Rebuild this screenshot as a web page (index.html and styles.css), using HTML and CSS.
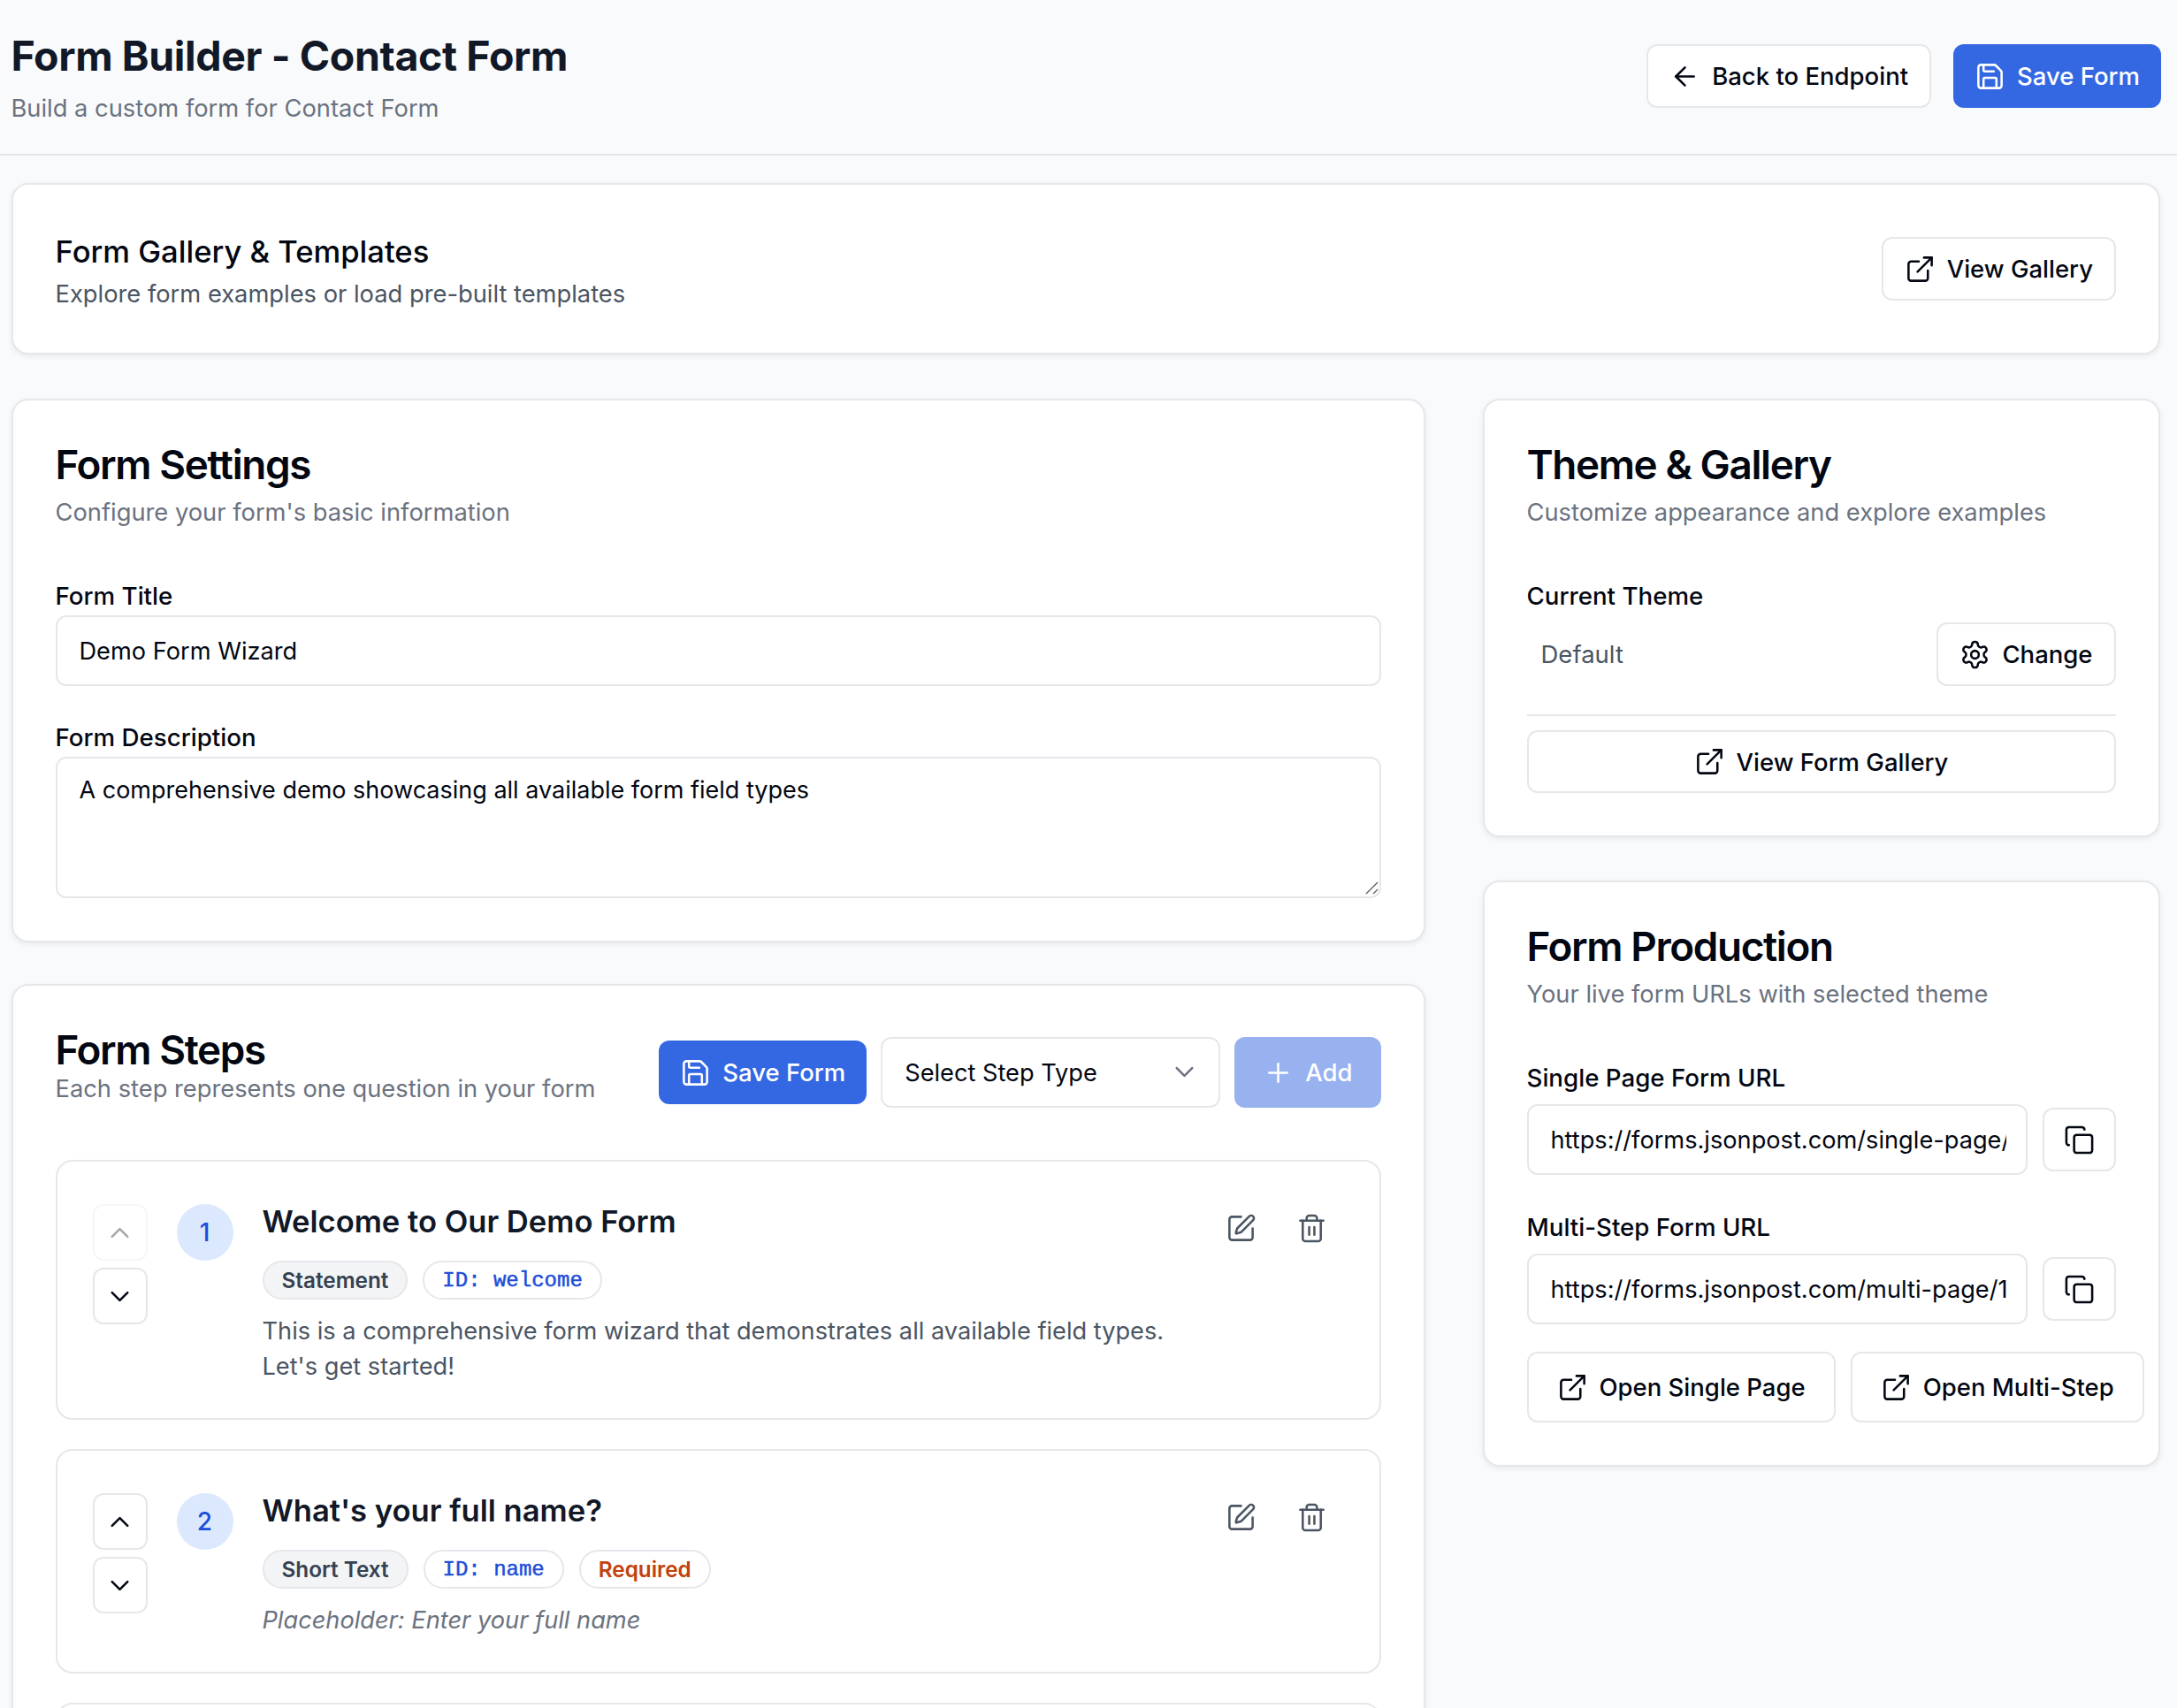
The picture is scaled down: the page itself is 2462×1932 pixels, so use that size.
FILE: index.html
```html
<!DOCTYPE html>
<html lang="en">
<head>
    <meta charset="UTF-8">
    <meta name="viewport" content="width=device-width, initial-scale=1.0">
    <title>Form Builder - Contact Form</title>
    <link rel="stylesheet" href="styles.css">
</head>
<body>

    <!-- icon sprites -->
    <svg class="sprites" xmlns="http://www.w3.org/2000/svg">
        <symbol id="i-arrow" viewBox="0 0 24 24"><path d="m12 19-7-7 7-7"/><path d="M19 12H5"/></symbol>
        <symbol id="i-save" viewBox="0 0 24 24"><path d="M15.2 3a2 2 0 0 1 1.4.6l3.8 3.8a2 2 0 0 1 .6 1.4V19a2 2 0 0 1-2 2H5a2 2 0 0 1-2-2V5a2 2 0 0 1 2-2z"/><path d="M17 21v-7a1 1 0 0 0-1-1H8a1 1 0 0 0-1 1v7"/><path d="M7 3v4a1 1 0 0 0 1 1h7"/></symbol>
        <symbol id="i-external" viewBox="0 0 24 24"><path d="M15 3h6v6"/><path d="M10 14 21 3"/><path d="M18 13v6a2 2 0 0 1-2 2H5a2 2 0 0 1-2-2V8a2 2 0 0 1 2-2h6"/></symbol>
        <symbol id="i-pen" viewBox="0 0 24 24"><path d="M12 3H5a2 2 0 0 0-2 2v14a2 2 0 0 0 2 2h14a2 2 0 0 0 2-2v-7"/><path d="M18.375 2.625a1 1 0 0 1 3 3l-9.013 9.014a2 2 0 0 1-.853.505l-2.873.84a.5.5 0 0 1-.62-.62l.84-2.873a2 2 0 0 1 .506-.852z"/></symbol>
        <symbol id="i-trash" viewBox="0 0 24 24"><path d="M3 6h18"/><path d="M19 6v14c0 1-1 2-2 2H7c-1 0-2-1-2-2V6"/><path d="M8 6V4c0-1 1-2 2-2h4c1 0 2 1 2 2v2"/><path d="M10 11v6"/><path d="M14 11v6"/></symbol>
        <symbol id="i-gear" viewBox="0 0 24 24"><path d="M12.22 2h-.44a2 2 0 0 0-2 2v.18a2 2 0 0 1-1 1.73l-.43.25a2 2 0 0 1-2 0l-.15-.08a2 2 0 0 0-2.73.73l-.22.38a2 2 0 0 0 .73 2.73l.15.1a2 2 0 0 1 1 1.72v.51a2 2 0 0 1-1 1.74l-.15.09a2 2 0 0 0-.73 2.73l.22.38a2 2 0 0 0 2.73.73l.15-.08a2 2 0 0 1 2 0l.43.25a2 2 0 0 1 1 1.73V20a2 2 0 0 0 2 2h.44a2 2 0 0 0 2-2v-.18a2 2 0 0 1 1-1.73l.43-.25a2 2 0 0 1 2 0l.15.08a2 2 0 0 0 2.73-.73l.22-.39a2 2 0 0 0-.73-2.73l-.15-.08a2 2 0 0 1-1-1.74v-.5a2 2 0 0 1 1-1.74l.15-.09a2 2 0 0 0 .73-2.73l-.22-.38a2 2 0 0 0-2.73-.73l-.15.08a2 2 0 0 1-2 0l-.43-.25a2 2 0 0 1-1-1.73V4a2 2 0 0 0-2-2z"/><circle cx="12" cy="12" r="3"/></symbol>
        <symbol id="i-copy" viewBox="0 0 24 24"><rect x="8" y="8" width="14" height="14" rx="2"/><path d="M4 16c-1.1 0-2-.9-2-2V4c0-1.1.9-2 2-2h10c1.1 0 2 .9 2 2"/></symbol>
        <symbol id="i-up" viewBox="0 0 24 24"><path d="m18 15-6-6-6 6"/></symbol>
        <symbol id="i-down" viewBox="0 0 24 24"><path d="m6 9 6 6 6-6"/></symbol>
        <symbol id="i-plus" viewBox="0 0 24 24"><path d="M5 12h14"/><path d="M12 5v14"/></symbol>
    </svg>

    <header class="page-header">
        <div>
            <h1>Form Builder - Contact Form</h1>
            <p class="page-sub">Build a custom form for Contact Form</p>
        </div>
        <div class="header-actions">
            <button class="btn"><svg class="icon"><use href="#i-arrow"/></svg>Back to Endpoint</button>
            <button class="btn btn-primary"><svg class="icon"><use href="#i-save"/></svg>Save Form</button>
        </div>
    </header>

    <main class="page-main">
        <section class="card gallery-card">
            <div class="gallery-text">
                <h2 class="gallery-title">Form Gallery &amp; Templates</h2>
                <p class="gallery-sub">Explore form examples or load pre-built templates</p>
            </div>
            <button class="btn"><svg class="icon"><use href="#i-external"/></svg>View Gallery</button>
        </section>

        <div class="columns">
            <div class="col">
                <section class="card">
                    <div class="card-head">
                        <h2 class="card-title">Form Settings</h2>
                        <p class="card-sub">Configure your form's basic information</p>
                    </div>
                    <label class="field-label tight">Form Title</label>
                    <input class="text-input" type="text" value="Demo Form Wizard">
                    <label class="field-label tight next">Form Description</label>
                    <div class="area-wrap">
                        <textarea class="text-input text-area">A comprehensive demo showcasing all available form field types</textarea>
                        <svg class="area-grip" viewBox="0 0 16 16"><path d="M1 15 14 2"/><path d="M9 15l5-5"/></svg>
                    </div>
                </section>

                <section class="card">
                    <div class="steps-head">
                        <div>
                            <h2 class="card-title">Form Steps</h2>
                            <p class="steps-sub">Each step represents one question in your form</p>
                        </div>
                        <div class="steps-controls">
                            <button class="btn btn-primary"><svg class="icon"><use href="#i-save"/></svg>Save Form</button>
                            <div class="select-wrap">
                                <select class="step-select"><option>Select Step Type</option></select>
                                <svg class="icon select-chevron"><use href="#i-down"/></svg>
                            </div>
                            <button class="btn btn-primary btn-add"><svg class="icon"><use href="#i-plus"/></svg>Add</button>
                        </div>
                    </div>

                    <div class="step-list">
                        <article class="step">
                            <div class="move-btns">
                                <button class="move-btn disabled"><svg class="icon"><use href="#i-up"/></svg></button>
                                <button class="move-btn"><svg class="icon"><use href="#i-down"/></svg></button>
                            </div>
                            <div class="step-num">1</div>
                            <div class="step-body">
                                <h3 class="step-title">Welcome to Our Demo Form</h3>
                                <div class="badges">
                                    <span class="badge badge-type">Statement</span>
                                    <span class="badge badge-id">ID: welcome</span>
                                </div>
                                <p class="step-desc">This is a comprehensive form wizard that demonstrates all available field types. Let's get started!</p>
                            </div>
                            <div class="step-actions">
                                <button class="icon-btn"><svg class="icon"><use href="#i-pen"/></svg></button>
                                <button class="icon-btn"><svg class="icon"><use href="#i-trash"/></svg></button>
                            </div>
                        </article>

                        <article class="step">
                            <div class="move-btns">
                                <button class="move-btn"><svg class="icon"><use href="#i-up"/></svg></button>
                                <button class="move-btn"><svg class="icon"><use href="#i-down"/></svg></button>
                            </div>
                            <div class="step-num">2</div>
                            <div class="step-body">
                                <h3 class="step-title">What's your full name?</h3>
                                <div class="badges">
                                    <span class="badge badge-type">Short Text</span>
                                    <span class="badge badge-id">ID: name</span>
                                    <span class="badge badge-req">Required</span>
                                </div>
                                <p class="step-desc step-hint">Placeholder: Enter your full name</p>
                            </div>
                            <div class="step-actions">
                                <button class="icon-btn"><svg class="icon"><use href="#i-pen"/></svg></button>
                                <button class="icon-btn"><svg class="icon"><use href="#i-trash"/></svg></button>
                            </div>
                        </article>

                        <article class="step step-next"></article>
                    </div>
                </section>
            </div>

            <div class="col col-side">
                <section class="card">
                    <div class="card-head">
                        <h2 class="card-title">Theme &amp; Gallery</h2>
                        <p class="card-sub">Customize appearance and explore examples</p>
                    </div>
                    <label class="field-label">Current Theme</label>
                    <div class="theme-row">
                        <span class="theme-name">Default</span>
                        <button class="btn"><svg class="icon"><use href="#i-gear"/></svg>Change</button>
                    </div>
                    <hr class="divider">
                    <button class="btn btn-wide"><svg class="icon"><use href="#i-external"/></svg>View Form Gallery</button>
                </section>

                <section class="card">
                    <div class="card-head">
                        <h2 class="card-title">Form Production</h2>
                        <p class="card-sub">Your live form URLs with selected theme</p>
                    </div>
                    <label class="field-label">Single Page Form URL</label>
                    <div class="url-row">
                        <input class="text-input" type="text" readonly value="https://forms.jsonpost.com/single-page/1234567890">
                        <button class="btn btn-copy"><svg class="icon"><use href="#i-copy"/></svg></button>
                    </div>
                    <label class="field-label next">Multi-Step Form URL</label>
                    <div class="url-row">
                        <input class="text-input" type="text" readonly value="https://forms.jsonpost.com/multi-page/1234567890">
                        <button class="btn btn-copy"><svg class="icon"><use href="#i-copy"/></svg></button>
                    </div>
                    <div class="open-row">
                        <button class="btn btn-tall"><svg class="icon"><use href="#i-external"/></svg>Open Single Page</button>
                        <button class="btn btn-tall"><svg class="icon"><use href="#i-external"/></svg>Open Multi-Step</button>
                    </div>
                </section>
            </div>
        </div>
    </main>

</body>
</html>
```

FILE: styles.css
```css
html, body {
    height: 100vh;
    overflow: hidden;
}

body {
    margin: 0;
    font-family: Inter, "Noto Sans", sans-serif;
    font-size: 27.3px;
    color: #030712;
    background-color: #f9fafb;
}

h1, h2, h3, p {
    margin: 0;
}

.sprites {
    display: none;
}

.icon {
    width: 35px;
    height: 35px;
    flex-shrink: 0;
    fill: none;
    stroke: currentColor;
    stroke-width: 1.75;
    stroke-linecap: round;
    stroke-linejoin: round;
}

/* header */
.page-header {
    display: flex;
    justify-content: space-between;
    align-items: flex-start;
    padding: 35px 18px 32px 12.5px;
    border-bottom: 2px solid #e5e7eb;
}

.page-header h1 {
    font-size: 46.5px;
    line-height: 56px;
    font-weight: 700;
    letter-spacing: -0.008em;
    color: #111827;
}

.page-sub {
    margin-top: 13px;
    line-height: 38px;
    color: #6b7280;
}

.header-actions {
    display: flex;
    gap: 25px;
    margin-top: 15px;
}

/* buttons */
.btn {
    display: inline-flex;
    align-items: center;
    justify-content: center;
    gap: 13px;
    height: 72px;
    padding: 0 24px;
    font-family: inherit;
    font-size: 27.5px;
    font-weight: 500;
    color: #030712;
    background-color: #fff;
    border: 2px solid #e5e7eb;
    border-radius: 12px;
    white-space: nowrap;
    cursor: pointer;
}

.btn-primary {
    color: #fff;
    background-color: #3468e3;
    border: none;
}

.btn-add {
    height: 80px;
    padding: 0 32px;
    opacity: 0.5;
}

.btn-wide {
    width: 100%;
    height: 71px;
}

.btn-copy {
    width: 83px;
    padding: 0;
    flex-shrink: 0;
}

.btn-tall {
    height: 80px;
    padding: 0 32px;
    flex-shrink: 0;
}

/* layout */
.page-main {
    padding: 31px 19px 0 12.5px;
    display: flex;
    flex-direction: column;
    gap: 50px;
}

.columns {
    display: grid;
    grid-template-columns: 1599px 766px;
    column-gap: 65px;
}

.col {
    display: flex;
    flex-direction: column;
    gap: 47px;
    min-width: 0;
}

.col-side {
    gap: 49px;
}

.card {
    padding: 48px;
    background-color: #fff;
    border: 2px solid #e5e7eb;
    border-radius: 19px;
    box-shadow: 0 2px 6px rgba(0, 0, 0, 0.07);
}

.gallery-card {
    display: flex;
    justify-content: space-between;
    align-items: center;
    height: 194px;
    box-sizing: border-box;
    padding-top: 0;
    padding-bottom: 0;
}

.gallery-text {
    margin-top: 3px;
}

.gallery-title {
    font-size: 34.6px;
    line-height: 48px;
    font-weight: 500;
}

.gallery-sub {
    margin-top: 6px;
    line-height: 38px;
    color: #4b5563;
}

.card-head {
    margin-bottom: 57px;
}

.card-title {
    font-size: 45.8px;
    line-height: 50px;
    font-weight: 600;
    letter-spacing: -0.03em;
}

.card-sub {
    margin-top: 10px;
    line-height: 38px;
    color: #6b7280;
}

/* form fields */
.field-label {
    display: block;
    margin-bottom: 12px;
    font-size: 27.7px;
    line-height: 36px;
    font-weight: 500;
}

.field-label.tight {
    margin-bottom: 4px;
}

.field-label.next {
    margin-top: 41px;
}

.field-label.tight.next {
    margin-top: 40px;
}

.text-input {
    display: block;
    box-sizing: border-box;
    width: 100%;
    height: 80px;
    padding: 0 22px 0 25px;
    font-family: inherit;
    font-size: 27.2px;
    color: #030712;
    background-color: #fff;
    border: 2px solid #e5e7eb;
    border-radius: 12px;
    outline: none;
}

.area-wrap {
    position: relative;
}

.text-area {
    height: 160px;
    padding-top: 17px;
    font-size: 27px;
    line-height: 38px;
    resize: none;
}

.area-grip {
    position: absolute;
    right: 2px;
    bottom: 4px;
    width: 16px;
    height: 16px;
    fill: none;
    stroke: #666;
    stroke-width: 1.5;
}

.theme-row {
    display: flex;
    justify-content: space-between;
    align-items: center;
    padding-left: 16px;
}

.theme-name {
    font-size: 27.5px;
    color: #4b5563;
}

.divider {
    margin: 32px 0 16px;
    border: none;
    border-top: 2px solid #e5e7eb;
}

.url-row {
    display: flex;
    align-items: center;
    gap: 17px;
}

.url-row .text-input {
    flex: 1;
    min-width: 0;
}

.open-row {
    display: flex;
    gap: 17px;
    margin-top: 31px;
}

/* steps */
.steps-head {
    display: flex;
    justify-content: space-between;
    align-items: flex-start;
    margin-bottom: 59px;
}

.steps-sub {
    margin-top: 1px;
    line-height: 36px;
    color: #6b7280;
}

.steps-controls {
    display: flex;
    align-items: center;
    gap: 16px;
    padding-top: 10px;
}

.select-wrap {
    position: relative;
}

.step-select {
    display: block;
    width: 384px;
    height: 80px;
    padding: 0 25px;
    font-family: inherit;
    font-size: 27.2px;
    color: #030712;
    background-color: #fff;
    border: 2px solid #e5e7eb;
    border-radius: 12px;
    appearance: none;
}

.select-chevron {
    position: absolute;
    top: 22px;
    right: 23px;
    color: #6b7280;
}

.step-list {
    display: flex;
    flex-direction: column;
    gap: 33px;
}

.step {
    display: flex;
    align-items: flex-start;
    gap: 33px;
    padding: 48px 40px 38px;
    border: 2px solid #e5e7eb;
    border-radius: 19px;
}

.step-next {
    height: 200px;
}

.move-btns {
    display: flex;
    flex-direction: column;
    gap: 8px;
}

.move-btn {
    display: flex;
    align-items: center;
    justify-content: center;
    width: 62px;
    height: 64px;
    padding: 0;
    color: #030712;
    background-color: #fff;
    border: 2px solid #e5e7eb;
    border-radius: 12px;
}

.move-btn.disabled {
    opacity: 0.35;
}

.step-num {
    display: flex;
    align-items: center;
    justify-content: center;
    flex-shrink: 0;
    width: 64px;
    height: 64px;
    font-size: 28px;
    font-weight: 500;
    color: #1d4ed8;
    background-color: #dbe8fd;
    border-radius: 50%;
}

.step-body {
    flex: 1;
    min-width: 0;
}

.step-title {
    margin-top: -1px;
    font-size: 34.6px;
    line-height: 40px;
    font-weight: 600;
    color: #111827;
}

.badges {
    display: flex;
    gap: 17px;
    margin-top: 25px;
}

.badge {
    display: flex;
    align-items: center;
    height: 44px;
    box-sizing: border-box;
    padding: 0 20px;
    font-size: 24.3px;
    font-weight: 600;
    border: 2px solid #e5e7eb;
    border-radius: 22px;
}

.badge-type {
    color: #374151;
    background-color: #f3f4f6;
}

.badge-id {
    font-family: "Liberation Mono", monospace;
    font-size: 24px;
    font-weight: 400;
    color: #1d4ed8;
    -webkit-text-stroke: 0.5px #1d4ed8;
}

.badge-req {
    color: #c2410c;
}

.step-desc {
    margin-top: 16px;
    font-size: 27.2px;
    line-height: 40px;
    color: #4b5563;
}

.step-hint {
    font-style: italic;
    color: #6b7280;
}

.step-actions {
    display: flex;
    gap: 8px;
    margin-top: -1px;
}

.icon-btn {
    display: flex;
    align-items: center;
    justify-content: center;
    width: 72px;
    height: 56px;
    padding: 0;
    color: #4b5563;
    background: none;
    border: none;
}
```
